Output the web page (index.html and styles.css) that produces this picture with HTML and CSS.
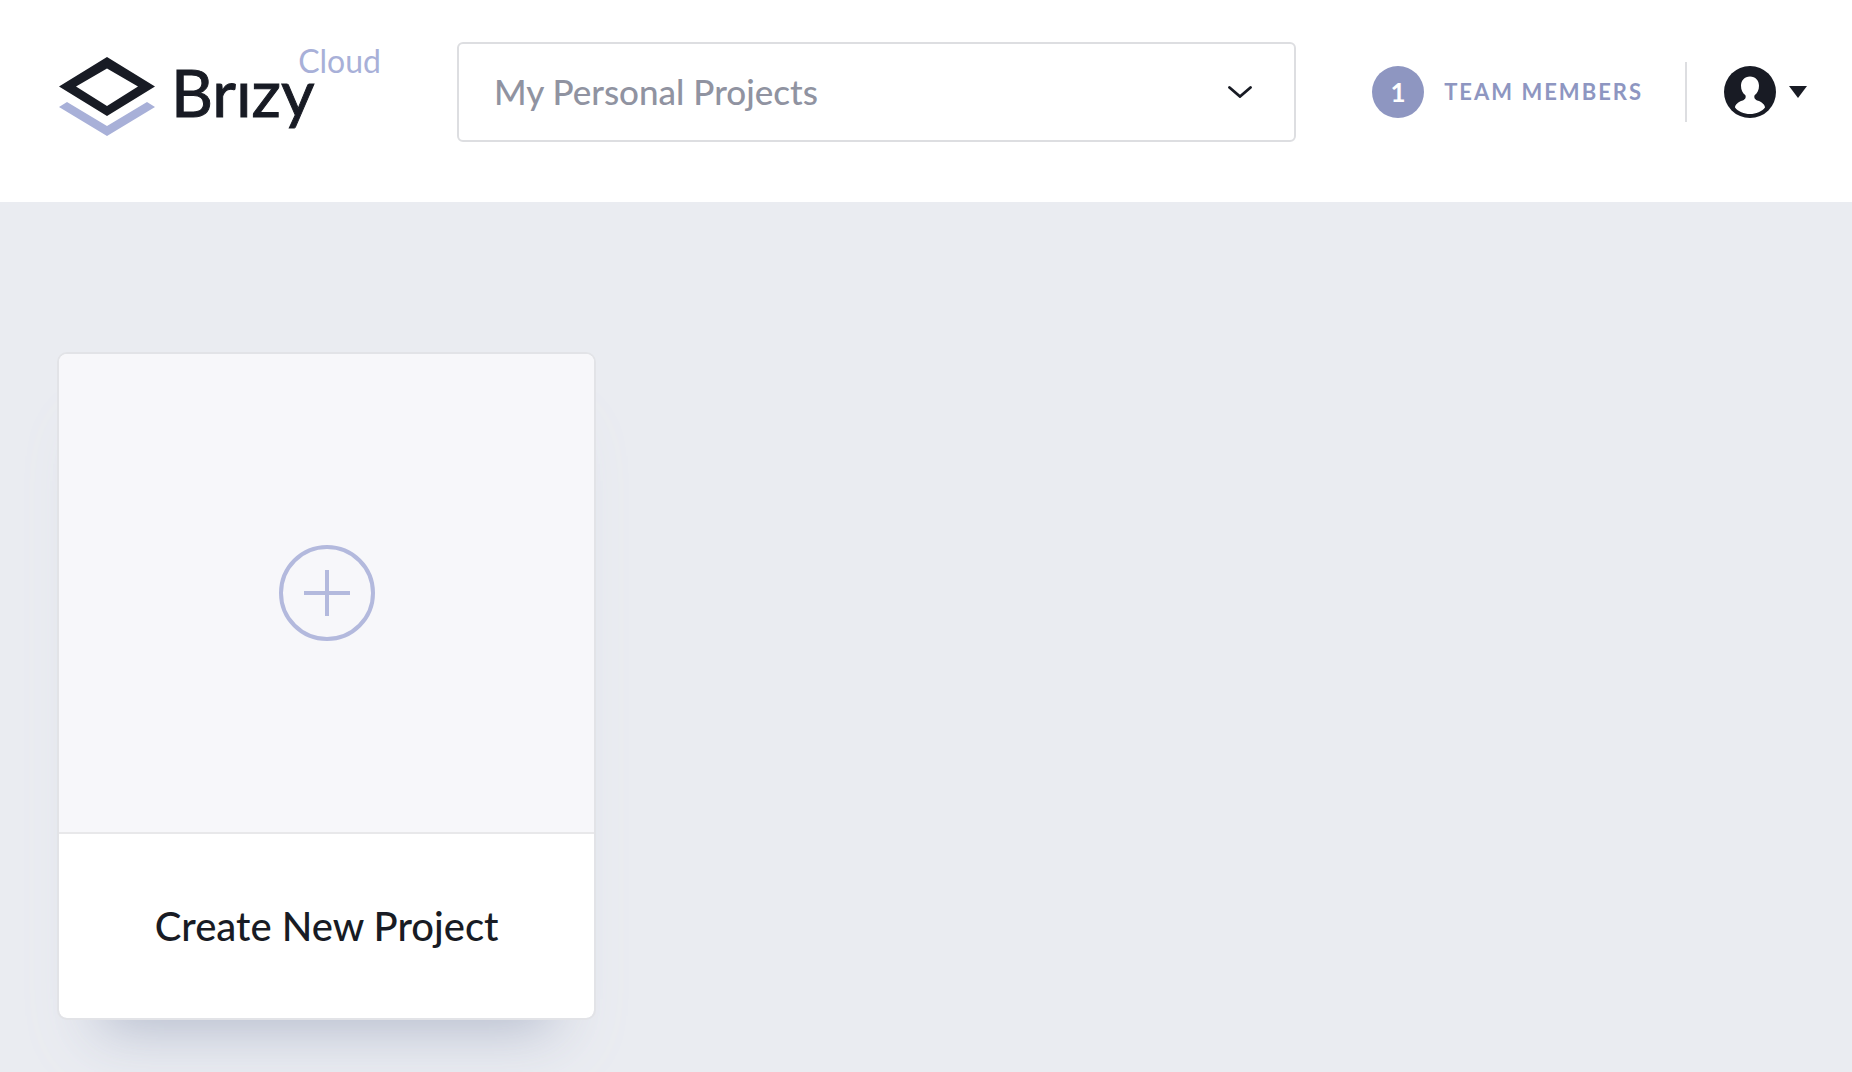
FILE: index.html
```html
<!DOCTYPE html>
<html lang="en">
<head>
  <meta charset="utf-8">
  <meta name="viewport" content="width=device-width, initial-scale=1">
  <title>Brizy Cloud</title>
  <link rel="stylesheet" href="styles.css">
</head>
<body>
  <header class="header">
    <a class="logo" href="#">
      <svg class="logo-mark" viewBox="0 0 96 80" aria-hidden="true">
        <path fill="#181b24" fill-rule="evenodd" d="M48 0 96 29.500 48 59 0 29.500ZM48 11.500 17 29.500 48 49 79 29.500Z"/>
        <path fill="#a8b0d8" d="M0 50 8 45 48 69 88 45 96 50 48 79Z"/>
      </svg>
      <span class="logo-name">Brızy</span>
      <span class="logo-tag">Cloud</span>
    </a>

    <div class="picker">
      <select class="picker-select" aria-label="Workspace">
        <option>My Personal Projects</option>
      </select>
      <svg class="picker-arrow" viewBox="0 0 24 12" aria-hidden="true">
        <path d="M1.500 1.500 12 10.500 22.500 1.500" fill="none" stroke="#181b24" stroke-width="2.800" stroke-linecap="round"/>
      </svg>
    </div>

    <div class="account">
      <a class="team" href="#">
        <span class="team-count">1</span>
        <span class="team-label">Team members</span>
      </a>
      <button class="profile" type="button" aria-label="Account menu">
        <svg class="avatar" viewBox="0 0 52 52" aria-hidden="true">
          <circle cx="26" cy="26" r="26" fill="#181b24"/>
          <path fill="#fff" d="M26 10.500c-5.500 0-9 4-9 9.300 0 4.200 1.600 7.400 4.400 9.400 1 2.600-.6 4.600-3.600 5.600C14 36.200 11 39 11 41.500 14 45.500 20 48 26 48s12-2.500 15-6.500c0-2.500-3-5.300-6.800-6.700-3-1-4.600-3-3.600-5.600 2.800-2 4.400-5.200 4.400-9.400 0-5.300-3.500-9.300-9-9.300Z"/>
        </svg>
        <svg class="caret" viewBox="0 0 18 12" aria-hidden="true">
          <path fill="#181b24" d="M0 0H18L9 12Z"/>
        </svg>
      </button>
    </div>
  </header>

  <main class="projects">
    <button class="card" type="button">
      <span class="card-preview">
        <svg class="plus" viewBox="0 0 96 96" fill="none" stroke="#b3b9dd" stroke-width="4" aria-hidden="true">
          <circle cx="48" cy="48" r="46"/>
          <path d="M25 48H71M48 25V71"/>
        </svg>
      </span>
      <span class="card-title">Create New Project</span>
    </button>
  </main>
</body>
</html>
```
FILE: styles.css
```css
* {
  box-sizing: border-box;
}

body {
  margin: 0;
  min-height: 100vh;
  display: flex;
  flex-direction: column;
  background: #eaecf1;
  color: #181b24;
  font-family: Lato, "Open Sans", sans-serif;
}

button {
  border: 0;
  padding: 0;
  background: none;
  color: inherit;
  font: inherit;
  cursor: pointer;
}

a {
  color: inherit;
  text-decoration: none;
}

.header {
  display: flex;
  align-items: center;
  padding: 42px 45px 60px 59px;
  background: #fff;
}

/* Logo */
.logo {
  position: relative;
  display: flex;
  align-items: center;
  gap: 16px;
  width: 322px;
  margin-right: 76px;
}

.logo-mark {
  width: 96px;
  height: 80px;
  margin-top: 10px;
}

.logo-name {
  font-size: 65px;
  line-height: 80px;
  -webkit-text-stroke: 1px #181b24;
}

.logo-tag {
  position: absolute;
  top: -6px;
  right: 0;
  color: #a8b0d8;
  font-size: 32px;
  line-height: 40px;
}

/* Workspace picker */
.picker {
  position: relative;
  flex: 1;
}

.picker-select {
  display: block;
  width: 100%;
  height: 100px;
  padding: 0 80px 2px 35px;
  appearance: none;
  border: 2px solid #dddee1;
  border-radius: 6px;
  background: #fff;
  color: #9093a1;
  font: 500 35px Lato, "Open Sans", sans-serif;
}

.picker-arrow {
  position: absolute;
  top: 44px;
  right: 44px;
  width: 24px;
  height: 12px;
  pointer-events: none;
}

/* Team and profile */
.account {
  display: flex;
  align-items: center;
  margin-left: 76px;
}

.team {
  display: flex;
  align-items: center;
  gap: 20px;
  padding-right: 42px;
  color: #8e96c1;
  font-weight: 700;
  font-size: 22px;
  line-height: 60px;
  border-right: 2px solid #dddee1;
}

.team-count {
  width: 52px;
  border-radius: 50%;
  background: #8e96c1;
  color: #fff;
  font-size: 26px;
  line-height: 52px;
  text-align: center;
}

.team-label {
  text-transform: uppercase;
  letter-spacing: 2px;
}

.profile {
  display: flex;
  align-items: center;
  gap: 13px;
  margin-left: 37px;
}

.avatar {
  width: 52px;
  height: 52px;
}

.caret {
  width: 18px;
  height: 12px;
}

/* Project grid */
.projects {
  flex: 1;
  display: grid;
  grid-template-columns: repeat(auto-fill, minmax(480px, 1fr));
  align-content: start;
  gap: 60px;
  padding: 150px 57px 50px;
}

.card {
  display: flex;
  flex-direction: column;
  border: 2px solid #e2e3e7;
  border-radius: 10px;
  background: #fff;
  background-clip: padding-box;
  box-shadow: 0 54px 50px -50px #b4bbcb, 0 50px 60px -24px #e0e3ec;
}

.card-preview {
  display: flex;
  align-items: center;
  justify-content: center;
  width: 100%;
  height: 480px;
  border-bottom: 2px solid #e8e8ea;
  border-radius: 8px 8px 0 0;
  background: #f7f7fa;
}

.plus {
  width: 96px;
  height: 96px;
}

.card-title {
  width: 100%;
  padding: 66px 24px;
  font-weight: 500;
  font-size: 40px;
  line-height: 52px;
  text-align: center;
}
```
